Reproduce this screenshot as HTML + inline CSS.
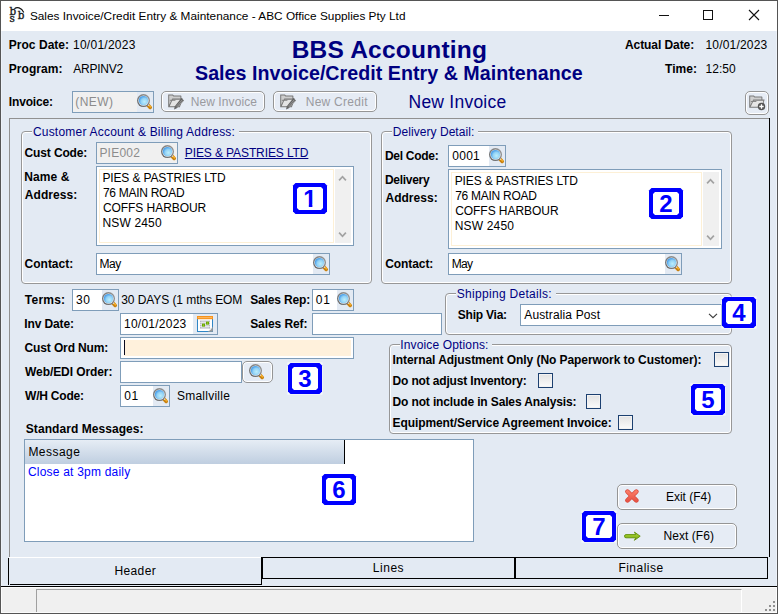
<!DOCTYPE html>
<html><head><meta charset="utf-8"><title>Sales Invoice/Credit Entry &amp; Maintenance</title>
<style>
html,body{margin:0;padding:0}
body{width:778px;height:614px;overflow:hidden;position:relative;background:#e3eaf3;font-family:"Liberation Sans",sans-serif;font-size:12px;color:#000}
#w{position:absolute;left:0;top:0;width:778px;height:614px;overflow:hidden;background:#e3eaf3}
.abs,.t,.f,.grp,.gap,.btn,.badge,.cb,.mag,.sb,.tbl,.th,.titlebar{position:absolute;box-sizing:border-box}
.t{white-space:nowrap;line-height:1}
.b{font-weight:bold}
.navy{color:#000080}
.titlebar{left:1px;top:1px;width:776px;height:30px;background:#fff}
.f{border:1px solid #7f9db9;background:#fff}
.f.dis{background:#f0f0f0}
.f.ta{box-shadow:inset 0 0 0 1px #fdf0d5}
.sb{background:#f0f0f0}
.grp{border:1px solid #979797;border-radius:4px;box-shadow:inset 0 0 0 1px #fff}
.gap{background:#e3eaf3}
.btn{border:1px solid #959595;border-radius:5px;background:#e6ecf5;box-shadow:inset 0 0 0 1px #fff}
.badge{width:34px;height:31px;border:3px solid #0000ff;border-radius:5px;background:#fff;color:#0000ff;font-weight:bold;font-size:24px;text-align:center;line-height:25px}
.badge span{display:block}
.cb{width:15px;height:15px;border:1px solid #1c4070;background:linear-gradient(#e2e2e2,#fbfbfb);box-shadow:inset 0 0 0 1px #f3f3f3}
.tbl{border:1px solid #7f9db9;background:#fff}
.th{background:linear-gradient(#e6edf5,#bfcee0)}
.frame{position:absolute;left:0;top:0;width:778px;height:614px;box-sizing:border-box;border:1px solid #555;pointer-events:none}
</style></head>
<body><div id="w">
<div class="titlebar"></div>
<svg class="abs" style="left:8px;top:6px" width="18" height="17" viewBox="0 0 18 17"><text x="1.5" y="8.9" font-family="DejaVu Serif, serif" font-weight="normal" stroke="#1a1a1a" stroke-width="0.35" font-size="10.4" fill="#1a1a1a">b</text><text x="9.7" y="12.9" font-family="DejaVu Serif, serif" font-weight="normal" stroke="#1a1a1a" stroke-width="0.35" font-size="10.4" fill="#1a1a1a">b</text><text x="1.6" y="15.9" font-family="DejaVu Serif, serif" font-weight="normal" stroke="#1a1a1a" stroke-width="0.35" font-size="10.4" fill="#1a1a1a">s</text><path d="M6.4 2.7 C8.8 0.9 13.4 1.1 15.8 6.4" fill="none" stroke="#111" stroke-width="1.1"/></svg>
<div class="t " style="left:29.90px;top:11px;font-size:11.8px;letter-spacing:0.020px;color:#000">Sales Invoice/Credit Entry &amp; Maintenance - ABC Office Supplies Pty Ltd</div>
<div class="abs" style="left:659px;top:15px;width:10px;height:1px;background:#111"></div>
<div class="abs" style="left:703px;top:10px;width:10px;height:10px;border:1px solid #111"></div>
<svg class="abs" style="left:748px;top:9px" width="12" height="12" viewBox="0 0 12 12"><path d="M1 1 L11 11 M11 1 L1 11" stroke="#111" stroke-width="1.1" fill="none"/></svg>
<div class="t b" style="left:8.75px;top:39px;font-size:12px;letter-spacing:0.033px;">Proc Date:</div>
<div class="t " style="left:73.00px;top:39px;font-size:12px;letter-spacing:0.256px;">10/01/2023</div>
<div class="t b" style="left:8.75px;top:63px;font-size:12px;letter-spacing:0.071px;">Program:</div>
<div class="t " style="left:73.30px;top:63px;font-size:12px;letter-spacing:-0.258px;">ARPINV2</div>
<div class="t b navy" style="left:291.65px;top:38px;font-size:24.5px;letter-spacing:0.231px;">BBS Accounting</div>
<div class="t b navy" style="left:195.00px;top:64px;font-size:19.65px;letter-spacing:0.032px;">Sales Invoice/Credit Entry &amp; Maintenance</div>
<div class="t b" style="left:624.95px;top:39px;font-size:12px;letter-spacing:-0.073px;">Actual Date:</div>
<div class="t " style="left:705.50px;top:39px;font-size:12px;letter-spacing:0.189px;">10/01/2023</div>
<div class="t b" style="left:665.05px;top:63px;font-size:12px;letter-spacing:0.025px;">Time:</div>
<div class="t " style="left:705.50px;top:63px;font-size:12px;letter-spacing:0.050px;">12:50</div>
<div class="t b" style="left:8.75px;top:96px;font-size:12px;letter-spacing:-0.143px;">Invoice:</div>
<div class="f dis" style="left:72px;top:91px;width:82px;height:22px;"></div>
<div class="t " style="left:75.25px;top:96px;font-size:12px;letter-spacing:0.425px;color:#8c8c8c">(NEW)</div>
<div class="abs" style="left:137px;top:92px;width:16px;height:20px;background:#e3eaf3"></div>
<svg class="mag" style="left:137px;top:94px" width="16" height="16" viewBox="0 0 16 16"><defs><radialGradient id="g1" cx="0.6" cy="0.62" r="0.65"><stop offset="0" stop-color="#bdeefb"/><stop offset="0.55" stop-color="#92d2f6"/><stop offset="1" stop-color="#3a94e6"/></radialGradient><linearGradient id="r1" x1="1" y1="0" x2="0" y2="1"><stop offset="0" stop-color="#9a9a9a"/><stop offset="1" stop-color="#626262"/></linearGradient></defs><path d="M10.9 11 L13.2 13.4" stroke="#c9820f" stroke-width="3.6" stroke-linecap="round" fill="none"/><path d="M11.5 10.8 L13.5 12.8" stroke="#f5ae2a" stroke-width="1.6" stroke-linecap="round" fill="none"/><path d="M9.6 10.6 L10.8 9.4 L12.3 10.9 L11.1 12.1Z" fill="#e9edf2"/><circle cx="6.5" cy="6.6" r="6.5" fill="url(#r1)"/><circle cx="6.5" cy="6.6" r="5.2" fill="#eceef0"/><circle cx="6.5" cy="6.6" r="4.7" fill="url(#g1)"/></svg>
<div class="btn" style="left:161px;top:91px;width:104px;height:21px;"></div>
<svg class="abs" style="left:168px;top:94px" width="17" height="16" viewBox="0 0 17 16"><path d="M0.2 0.4 H4.9 L5.9 1.6 H12.8 Q13.4 1.6 13.4 2.2 V4.6 H14.8 L11.9 13.3 H0.2 Z" fill="#777777"/><path d="M1.2 1.4 H4.4 L5.4 2.6 H12.4 V4.6 H4.3 L1.2 10.8 Z" fill="#cdcdcd"/><path d="M4.6 5.7 H13.4 L11.1 12.3 H1.7 Z" fill="#e4e4e4"/><path d="M1.9 6.3 H7.4" stroke="#7c7c7c" stroke-width="0.9"/><path d="M13.4 3.9 L16 6.5 L8.8 14.3 L6 15.6 L6.8 12.2 Z" fill="#646464"/><path d="M14.3 5.7 L8.2 12.5 M15.1 6.6 L9 13.4" stroke="#b4b4b4" stroke-width="0.6"/></svg>
<div class="t " style="left:190.70px;top:96px;font-size:12px;letter-spacing:0.085px;color:#9a9a9f">New Invoice</div>
<div class="btn" style="left:273px;top:91px;width:104px;height:21px;"></div>
<svg class="abs" style="left:280px;top:94px" width="17" height="16" viewBox="0 0 17 16"><path d="M0.2 0.4 H4.9 L5.9 1.6 H12.8 Q13.4 1.6 13.4 2.2 V4.6 H14.8 L11.9 13.3 H0.2 Z" fill="#777777"/><path d="M1.2 1.4 H4.4 L5.4 2.6 H12.4 V4.6 H4.3 L1.2 10.8 Z" fill="#cdcdcd"/><path d="M4.6 5.7 H13.4 L11.1 12.3 H1.7 Z" fill="#e4e4e4"/><path d="M1.9 6.3 H7.4" stroke="#7c7c7c" stroke-width="0.9"/><path d="M13.4 3.9 L16 6.5 L8.8 14.3 L6 15.6 L6.8 12.2 Z" fill="#646464"/><path d="M14.3 5.7 L8.2 12.5 M15.1 6.6 L9 13.4" stroke="#b4b4b4" stroke-width="0.6"/></svg>
<div class="t " style="left:305.70px;top:96px;font-size:12px;letter-spacing:0.272px;color:#9a9a9f">New Credit</div>
<div class="t navy" style="left:408.50px;top:94px;font-size:17.5px;letter-spacing:0.240px;">New Invoice</div>
<div class="btn" style="left:745px;top:91px;width:24px;height:24px;"></div>
<svg class="abs" style="left:749px;top:95px" width="17" height="16" viewBox="0 0 17 16"><path d="M0.2 0.4 H4.9 L5.9 1.6 H12.8 Q13.4 1.6 13.4 2.2 V4.6 H15.6 L13.4 12.8 H0.2 Z" fill="#7a7a7a"/><path d="M1.2 1.4 H4.4 L5.4 2.6 H12.4 V4.6 H4.3 L1.2 10.6 Z" fill="#cfcfcf"/><path d="M4.6 5.7 H14.3 L12.6 11.8 H1.7 Z" fill="#e6e6e6"/><path d="M1.9 6.5 H7.4" stroke="#808080" stroke-width="0.9"/><circle cx="12.5" cy="11.5" r="3.7" fill="#555555"/><path d="M12.5 9.3 V13.7 M10.3 11.5 H14.7" stroke="#ffffff" stroke-width="1.3"/></svg>
<div class="abs" style="left:9px;top:118px;width:761px;height:1px;background:#919191"></div>
<div class="abs" style="left:9px;top:118px;width:1px;height:440px;background:#919191"></div>
<div class="abs" style="left:769px;top:118px;width:1px;height:439px;background:#000"></div>
<div class="grp" style="left:21px;top:131px;width:351px;height:153px;"></div>
<div class="gap" style="left:31.9px;top:129px;width:207.0px;height:6px"></div>
<div class="t navy" style="left:32.90px;top:126px;font-size:12px;letter-spacing:0.213px;">Customer Account &amp; Billing Address:</div>
<div class="t b" style="left:24.60px;top:147px;font-size:12px;letter-spacing:-0.139px;">Cust Code:</div>
<div class="f dis" style="left:96px;top:142px;width:82px;height:22px;"></div>
<div class="t " style="left:99.40px;top:147px;font-size:12px;letter-spacing:0.230px;color:#8c8c8c">PIE002</div>
<svg class="mag" style="left:161px;top:145px" width="16" height="16" viewBox="0 0 16 16"><defs><radialGradient id="g2" cx="0.6" cy="0.62" r="0.65"><stop offset="0" stop-color="#bdeefb"/><stop offset="0.55" stop-color="#92d2f6"/><stop offset="1" stop-color="#3a94e6"/></radialGradient><linearGradient id="r2" x1="1" y1="0" x2="0" y2="1"><stop offset="0" stop-color="#9a9a9a"/><stop offset="1" stop-color="#626262"/></linearGradient></defs><path d="M10.9 11 L13.2 13.4" stroke="#c9820f" stroke-width="3.6" stroke-linecap="round" fill="none"/><path d="M11.5 10.8 L13.5 12.8" stroke="#f5ae2a" stroke-width="1.6" stroke-linecap="round" fill="none"/><path d="M9.6 10.6 L10.8 9.4 L12.3 10.9 L11.1 12.1Z" fill="#e9edf2"/><circle cx="6.5" cy="6.6" r="6.5" fill="url(#r2)"/><circle cx="6.5" cy="6.6" r="5.2" fill="#eceef0"/><circle cx="6.5" cy="6.6" r="4.7" fill="url(#g2)"/></svg>
<div class="t navy" style="left:184.80px;top:147px;font-size:12px;letter-spacing:-0.106px;text-decoration:underline;text-underline-offset:1px">PIES &amp; PASTRIES LTD</div>
<div class="t b" style="left:24.35px;top:171px;font-size:12px;letter-spacing:0.080px;">Name &amp;</div>
<div class="t b" style="left:24.85px;top:189px;font-size:12px;letter-spacing:0.057px;">Address:</div>
<div class="f " style="left:96px;top:166px;width:258px;height:80px;"></div>
<div class="abs" style="left:99px;top:169px;width:235px;height:74px;border:1px solid #fdf0d6"></div>
<div class="abs" style="left:335px;top:169px;width:16px;height:74px;background:#f0f0f0"></div>
<svg class="abs" style="left:339px;top:175px;overflow:visible" width="7" height="6" viewBox="0 0 7 6"><path d="M0.1 5.3 L3.5 1.7 L6.9 5.3" fill="none" stroke="#a2a2a2" stroke-width="1.7"/></svg>
<svg class="abs" style="left:339px;top:232px;overflow:visible" width="7" height="6" viewBox="0 0 7 6"><path d="M0.1 0.7 L3.5 4.3 L6.9 0.7" fill="none" stroke="#a2a2a2" stroke-width="1.7"/></svg>
<div class="t " style="left:102.40px;top:172px;font-size:12px;letter-spacing:-0.128px;">PIES &amp; PASTRIES LTD</div>
<div class="t " style="left:102.90px;top:187px;font-size:12px;letter-spacing:-0.273px;">76 MAIN ROAD</div>
<div class="t " style="left:102.90px;top:202px;font-size:12px;letter-spacing:-0.054px;">COFFS HARBOUR</div>
<div class="t " style="left:102.40px;top:217px;font-size:12px;letter-spacing:0.171px;">NSW 2450</div>
<div class="t b" style="left:24.60px;top:258px;font-size:12px;letter-spacing:-0.014px;">Contact:</div>
<div class="f " style="left:96px;top:253px;width:234px;height:22px;"></div>
<div class="t " style="left:99.40px;top:258px;font-size:12px;letter-spacing:-0.450px;">May</div>
<div class="abs" style="left:313px;top:254px;width:16px;height:20px;background:#e3eaf3"></div>
<svg class="mag" style="left:313px;top:256px" width="16" height="16" viewBox="0 0 16 16"><defs><radialGradient id="g3" cx="0.6" cy="0.62" r="0.65"><stop offset="0" stop-color="#bdeefb"/><stop offset="0.55" stop-color="#92d2f6"/><stop offset="1" stop-color="#3a94e6"/></radialGradient><linearGradient id="r3" x1="1" y1="0" x2="0" y2="1"><stop offset="0" stop-color="#9a9a9a"/><stop offset="1" stop-color="#626262"/></linearGradient></defs><path d="M10.9 11 L13.2 13.4" stroke="#c9820f" stroke-width="3.6" stroke-linecap="round" fill="none"/><path d="M11.5 10.8 L13.5 12.8" stroke="#f5ae2a" stroke-width="1.6" stroke-linecap="round" fill="none"/><path d="M9.6 10.6 L10.8 9.4 L12.3 10.9 L11.1 12.1Z" fill="#e9edf2"/><circle cx="6.5" cy="6.6" r="6.5" fill="url(#r3)"/><circle cx="6.5" cy="6.6" r="5.2" fill="#eceef0"/><circle cx="6.5" cy="6.6" r="4.7" fill="url(#g3)"/></svg>
<svg class="abs" style="left:292px;top:182px" width="36" height="33" viewBox="-1 -1 36 33"><rect x="-0.6" y="-0.6" width="35.2" height="32.2" fill="#ffffff" fill-opacity="0.75"/><path d="M2.5 0 H31.5 L34 2.5 V28.5 L31.5 31 H2.5 L0 28.5 V2.5 Z" fill="#0000ff"/><path d="M6 4 H28 L30 6 V25 L28 27 H6 L4 25 V6 Z" fill="#ffffff"/><clipPath id="c1"><path d="M0 0 H34 V21 H19.4 V25 H15.8 V21 H0 Z"/></clipPath><text x="17" y="24" text-anchor="middle" font-family="Liberation Sans, sans-serif" font-weight="bold" font-size="24" fill="#0000ff" clip-path="url(#c1)">1</text></svg>
<div class="grp" style="left:381px;top:131px;width:351px;height:153px;"></div>
<div class="gap" style="left:392.3px;top:129px;width:86.0px;height:6px"></div>
<div class="t navy" style="left:392.80px;top:126px;font-size:12px;letter-spacing:0.050px;">Delivery Detail:</div>
<div class="t b" style="left:384.95px;top:150px;font-size:12px;letter-spacing:-0.275px;">Del Code:</div>
<div class="f " style="left:448px;top:145px;width:58px;height:22px;"></div>
<div class="t " style="left:452.20px;top:150px;font-size:12px;letter-spacing:0.300px;">0001</div>
<div class="abs" style="left:489px;top:146px;width:16px;height:20px;background:#e3eaf3"></div>
<svg class="mag" style="left:489px;top:148px" width="16" height="16" viewBox="0 0 16 16"><defs><radialGradient id="g4" cx="0.6" cy="0.62" r="0.65"><stop offset="0" stop-color="#bdeefb"/><stop offset="0.55" stop-color="#92d2f6"/><stop offset="1" stop-color="#3a94e6"/></radialGradient><linearGradient id="r4" x1="1" y1="0" x2="0" y2="1"><stop offset="0" stop-color="#9a9a9a"/><stop offset="1" stop-color="#626262"/></linearGradient></defs><path d="M10.9 11 L13.2 13.4" stroke="#c9820f" stroke-width="3.6" stroke-linecap="round" fill="none"/><path d="M11.5 10.8 L13.5 12.8" stroke="#f5ae2a" stroke-width="1.6" stroke-linecap="round" fill="none"/><path d="M9.6 10.6 L10.8 9.4 L12.3 10.9 L11.1 12.1Z" fill="#e9edf2"/><circle cx="6.5" cy="6.6" r="6.5" fill="url(#r4)"/><circle cx="6.5" cy="6.6" r="5.2" fill="#eceef0"/><circle cx="6.5" cy="6.6" r="4.7" fill="url(#g4)"/></svg>
<div class="t b" style="left:384.95px;top:174px;font-size:12px;letter-spacing:-0.293px;">Delivery</div>
<div class="t b" style="left:385.45px;top:192px;font-size:12px;letter-spacing:0.029px;">Address:</div>
<div class="f " style="left:448px;top:169px;width:274px;height:80px;"></div>
<div class="abs" style="left:451px;top:172px;width:251px;height:74px;border:1px solid #fdf0d6"></div>
<div class="abs" style="left:703px;top:172px;width:16px;height:74px;background:#f0f0f0"></div>
<svg class="abs" style="left:707px;top:178px;overflow:visible" width="7" height="6" viewBox="0 0 7 6"><path d="M0.1 5.3 L3.5 1.7 L6.9 5.3" fill="none" stroke="#a2a2a2" stroke-width="1.7"/></svg>
<svg class="abs" style="left:707px;top:235px;overflow:visible" width="7" height="6" viewBox="0 0 7 6"><path d="M0.1 0.7 L3.5 4.3 L6.9 0.7" fill="none" stroke="#a2a2a2" stroke-width="1.7"/></svg>
<div class="t " style="left:454.70px;top:175px;font-size:12px;letter-spacing:-0.128px;">PIES &amp; PASTRIES LTD</div>
<div class="t " style="left:455.20px;top:190px;font-size:12px;letter-spacing:-0.273px;">76 MAIN ROAD</div>
<div class="t " style="left:455.20px;top:205px;font-size:12px;letter-spacing:-0.054px;">COFFS HARBOUR</div>
<div class="t " style="left:454.70px;top:220px;font-size:12px;letter-spacing:0.171px;">NSW 2450</div>
<div class="t b" style="left:385.20px;top:258px;font-size:12px;letter-spacing:-0.071px;">Contact:</div>
<div class="f " style="left:448px;top:253px;width:234px;height:22px;"></div>
<div class="t " style="left:451.70px;top:258px;font-size:12px;letter-spacing:-0.700px;">May</div>
<div class="abs" style="left:665px;top:254px;width:16px;height:20px;background:#e3eaf3"></div>
<svg class="mag" style="left:665px;top:256px" width="16" height="16" viewBox="0 0 16 16"><defs><radialGradient id="g5" cx="0.6" cy="0.62" r="0.65"><stop offset="0" stop-color="#bdeefb"/><stop offset="0.55" stop-color="#92d2f6"/><stop offset="1" stop-color="#3a94e6"/></radialGradient><linearGradient id="r5" x1="1" y1="0" x2="0" y2="1"><stop offset="0" stop-color="#9a9a9a"/><stop offset="1" stop-color="#626262"/></linearGradient></defs><path d="M10.9 11 L13.2 13.4" stroke="#c9820f" stroke-width="3.6" stroke-linecap="round" fill="none"/><path d="M11.5 10.8 L13.5 12.8" stroke="#f5ae2a" stroke-width="1.6" stroke-linecap="round" fill="none"/><path d="M9.6 10.6 L10.8 9.4 L12.3 10.9 L11.1 12.1Z" fill="#e9edf2"/><circle cx="6.5" cy="6.6" r="6.5" fill="url(#r5)"/><circle cx="6.5" cy="6.6" r="5.2" fill="#eceef0"/><circle cx="6.5" cy="6.6" r="4.7" fill="url(#g5)"/></svg>
<svg class="abs" style="left:648px;top:187px" width="36" height="33" viewBox="-1 -1 36 33"><rect x="-0.6" y="-0.6" width="35.2" height="32.2" fill="#ffffff" fill-opacity="0.75"/><path d="M2.5 0 H31.5 L34 2.5 V28.5 L31.5 31 H2.5 L0 28.5 V2.5 Z" fill="#0000ff"/><path d="M6 4 H28 L30 6 V25 L28 27 H6 L4 25 V6 Z" fill="#ffffff"/><text x="17" y="24" text-anchor="middle" font-family="Liberation Sans, sans-serif" font-weight="bold" font-size="24" fill="#0000ff">2</text></svg>
<div class="t b" style="left:24.85px;top:294px;font-size:12px;letter-spacing:0.230px;">Terms:</div>
<div class="f " style="left:72px;top:289px;width:47px;height:22px;"></div>
<div class="t " style="left:76.00px;top:294px;font-size:12px;letter-spacing:0.600px;">30</div>
<div class="abs" style="left:102px;top:290px;width:16px;height:20px;background:#e3eaf3"></div>
<svg class="mag" style="left:102px;top:292px" width="16" height="16" viewBox="0 0 16 16"><defs><radialGradient id="g6" cx="0.6" cy="0.62" r="0.65"><stop offset="0" stop-color="#bdeefb"/><stop offset="0.55" stop-color="#92d2f6"/><stop offset="1" stop-color="#3a94e6"/></radialGradient><linearGradient id="r6" x1="1" y1="0" x2="0" y2="1"><stop offset="0" stop-color="#9a9a9a"/><stop offset="1" stop-color="#626262"/></linearGradient></defs><path d="M10.9 11 L13.2 13.4" stroke="#c9820f" stroke-width="3.6" stroke-linecap="round" fill="none"/><path d="M11.5 10.8 L13.5 12.8" stroke="#f5ae2a" stroke-width="1.6" stroke-linecap="round" fill="none"/><path d="M9.6 10.6 L10.8 9.4 L12.3 10.9 L11.1 12.1Z" fill="#e9edf2"/><circle cx="6.5" cy="6.6" r="6.5" fill="url(#r6)"/><circle cx="6.5" cy="6.6" r="5.2" fill="#eceef0"/><circle cx="6.5" cy="6.6" r="4.7" fill="url(#g6)"/></svg>
<div class="t " style="left:121.20px;top:294px;font-size:12px;letter-spacing:-0.072px;">30 DAYS (1 mths EOM</div>
<div class="t b" style="left:250.20px;top:294px;font-size:12px;letter-spacing:-0.139px;">Sales Rep:</div>
<div class="f " style="left:312px;top:289px;width:42px;height:22px;"></div>
<div class="t " style="left:315.70px;top:294px;font-size:12px;letter-spacing:0.850px;">01</div>
<div class="abs" style="left:337px;top:290px;width:16px;height:20px;background:#e3eaf3"></div>
<svg class="mag" style="left:337px;top:292px" width="16" height="16" viewBox="0 0 16 16"><defs><radialGradient id="g7" cx="0.6" cy="0.62" r="0.65"><stop offset="0" stop-color="#bdeefb"/><stop offset="0.55" stop-color="#92d2f6"/><stop offset="1" stop-color="#3a94e6"/></radialGradient><linearGradient id="r7" x1="1" y1="0" x2="0" y2="1"><stop offset="0" stop-color="#9a9a9a"/><stop offset="1" stop-color="#626262"/></linearGradient></defs><path d="M10.9 11 L13.2 13.4" stroke="#c9820f" stroke-width="3.6" stroke-linecap="round" fill="none"/><path d="M11.5 10.8 L13.5 12.8" stroke="#f5ae2a" stroke-width="1.6" stroke-linecap="round" fill="none"/><path d="M9.6 10.6 L10.8 9.4 L12.3 10.9 L11.1 12.1Z" fill="#e9edf2"/><circle cx="6.5" cy="6.6" r="6.5" fill="url(#r7)"/><circle cx="6.5" cy="6.6" r="5.2" fill="#eceef0"/><circle cx="6.5" cy="6.6" r="4.7" fill="url(#g7)"/></svg>
<div class="t b" style="left:24.35px;top:318px;font-size:12px;letter-spacing:-0.131px;">Inv Date:</div>
<div class="f " style="left:120px;top:313px;width:98px;height:22px;"></div>
<div class="t " style="left:124.00px;top:318px;font-size:12px;letter-spacing:0.244px;">10/01/2023</div>
<div class="abs" style="left:193px;top:314px;width:24px;height:20px;background:#e3eaf3"></div>
<svg class="abs" style="left:197px;top:316px" width="16" height="16" viewBox="0 0 16 16"><rect x="0.5" y="1.5" width="15" height="14" fill="#ffffff" stroke="#2f86c6"/><rect x="0" y="0" width="16" height="3.2" fill="#f7931c"/><rect x="1" y="1.3" width="14" height="0.8" fill="#fcc47a"/><rect x="3" y="4.6" width="10" height="8" fill="#b4b7bf"/><path d="M5 4.6 V12.6 M7 4.6 V12.6 M9 4.6 V12.6 M11 4.6 V12.6 M3 6.6 H13 M3 8.6 H13 M3 10.6 H13" stroke="#f4f5f8" stroke-width="0.7"/><rect x="5" y="7.6" width="3" height="3" fill="#6aa700"/><rect x="9" y="5.6" width="3" height="3" fill="#6aa700"/><rect x="6" y="8.6" width="1" height="1" fill="#a6d843"/><rect x="10" y="6.6" width="1" height="1" fill="#a6d843"/><path d="M10.5 15.8 Q13.5 14.5 15.8 10.5 V15.8 Z" fill="#9b9b9b"/><path d="M10.8 15 Q13 14.2 13.6 12 Q14.6 12.6 15.4 11.4 Q13.8 14.6 10.8 15Z" fill="#e6e9ee"/></svg>
<div class="t b" style="left:250.20px;top:318px;font-size:12px;letter-spacing:-0.083px;">Sales Ref:</div>
<div class="f " style="left:312px;top:313px;width:130px;height:22px;"></div>
<div class="t b" style="left:24.60px;top:342px;font-size:12px;letter-spacing:-0.138px;">Cust Ord Num:</div>
<div class="f " style="left:120px;top:337px;width:234px;height:22px;"></div>
<div class="abs" style="left:124px;top:340px;width:227px;height:16px;background:#fff1dc"></div>
<div class="abs" style="left:124px;top:340px;width:1px;height:15px;background:#0a0a1e"></div>
<div class="t b" style="left:25.10px;top:366px;font-size:12px;letter-spacing:-0.088px;">Web/EDI Order:</div>
<div class="f " style="left:120px;top:361px;width:122px;height:22px;"></div>
<div class="btn" style="left:242px;top:361px;width:31px;height:22px;"></div>
<svg class="mag" style="left:249px;top:364px" width="16" height="16" viewBox="0 0 16 16"><defs><radialGradient id="g8" cx="0.6" cy="0.62" r="0.65"><stop offset="0" stop-color="#bdeefb"/><stop offset="0.55" stop-color="#92d2f6"/><stop offset="1" stop-color="#3a94e6"/></radialGradient><linearGradient id="r8" x1="1" y1="0" x2="0" y2="1"><stop offset="0" stop-color="#9a9a9a"/><stop offset="1" stop-color="#626262"/></linearGradient></defs><path d="M10.9 11 L13.2 13.4" stroke="#c9820f" stroke-width="3.6" stroke-linecap="round" fill="none"/><path d="M11.5 10.8 L13.5 12.8" stroke="#f5ae2a" stroke-width="1.6" stroke-linecap="round" fill="none"/><path d="M9.6 10.6 L10.8 9.4 L12.3 10.9 L11.1 12.1Z" fill="#e9edf2"/><circle cx="6.5" cy="6.6" r="6.5" fill="url(#r8)"/><circle cx="6.5" cy="6.6" r="5.2" fill="#eceef0"/><circle cx="6.5" cy="6.6" r="4.7" fill="url(#g8)"/></svg>
<svg class="abs" style="left:287px;top:362px" width="36" height="33" viewBox="-1 -1 36 33"><rect x="-0.6" y="-0.6" width="35.2" height="32.2" fill="#ffffff" fill-opacity="0.75"/><path d="M2.5 0 H31.5 L34 2.5 V28.5 L31.5 31 H2.5 L0 28.5 V2.5 Z" fill="#0000ff"/><path d="M6 4 H28 L30 6 V25 L28 27 H6 L4 25 V6 Z" fill="#ffffff"/><text x="17" y="24" text-anchor="middle" font-family="Liberation Sans, sans-serif" font-weight="bold" font-size="24" fill="#0000ff">3</text></svg>
<div class="t b" style="left:25.10px;top:390px;font-size:12px;letter-spacing:-0.225px;">W/H Code:</div>
<div class="f " style="left:120px;top:385px;width:50px;height:22px;"></div>
<div class="t " style="left:124.20px;top:390px;font-size:12px;letter-spacing:0.550px;">01</div>
<div class="abs" style="left:153px;top:386px;width:16px;height:20px;background:#e3eaf3"></div>
<svg class="mag" style="left:153px;top:388px" width="16" height="16" viewBox="0 0 16 16"><defs><radialGradient id="g9" cx="0.6" cy="0.62" r="0.65"><stop offset="0" stop-color="#bdeefb"/><stop offset="0.55" stop-color="#92d2f6"/><stop offset="1" stop-color="#3a94e6"/></radialGradient><linearGradient id="r9" x1="1" y1="0" x2="0" y2="1"><stop offset="0" stop-color="#9a9a9a"/><stop offset="1" stop-color="#626262"/></linearGradient></defs><path d="M10.9 11 L13.2 13.4" stroke="#c9820f" stroke-width="3.6" stroke-linecap="round" fill="none"/><path d="M11.5 10.8 L13.5 12.8" stroke="#f5ae2a" stroke-width="1.6" stroke-linecap="round" fill="none"/><path d="M9.6 10.6 L10.8 9.4 L12.3 10.9 L11.1 12.1Z" fill="#e9edf2"/><circle cx="6.5" cy="6.6" r="6.5" fill="url(#r9)"/><circle cx="6.5" cy="6.6" r="5.2" fill="#eceef0"/><circle cx="6.5" cy="6.6" r="4.7" fill="url(#g9)"/></svg>
<div class="t " style="left:176.90px;top:390px;font-size:12px;letter-spacing:0.250px;">Smallville</div>
<div class="grp" style="left:445px;top:293px;width:287px;height:42px;"></div>
<div class="gap" style="left:455.8px;top:291px;width:99.8px;height:6px"></div>
<div class="t navy" style="left:456.80px;top:288px;font-size:12px;letter-spacing:0.300px;">Shipping Details:</div>
<div class="t b" style="left:457.80px;top:309px;font-size:12px;letter-spacing:-0.225px;">Ship Via:</div>
<div class="f " style="left:520px;top:304px;width:202px;height:22px;"></div>
<div class="t " style="left:524.30px;top:309px;font-size:12px;letter-spacing:0.131px;">Australia Post</div>
<svg class="abs" style="left:708px;top:313px" width="10" height="6" viewBox="0 0 10 6"><path d="M1 0.9 L5 4.7 L9 0.9" fill="none" stroke="#3c3c3c" stroke-width="1.15"/></svg>
<svg class="abs" style="left:721px;top:296px" width="36" height="33" viewBox="-1 -1 36 33"><rect x="-0.6" y="-0.6" width="35.2" height="32.2" fill="#ffffff" fill-opacity="0.75"/><path d="M2.5 0 H31.5 L34 2.5 V28.5 L31.5 31 H2.5 L0 28.5 V2.5 Z" fill="#0000ff"/><path d="M6 4 H28 L30 6 V25 L28 27 H6 L4 25 V6 Z" fill="#ffffff"/><text x="17" y="24" text-anchor="middle" font-family="Liberation Sans, sans-serif" font-weight="bold" font-size="24" fill="#0000ff">4</text></svg>
<div class="grp" style="left:389px;top:344px;width:343px;height:90px;"></div>
<div class="gap" style="left:399.8px;top:342px;width:92.6px;height:6px"></div>
<div class="t navy" style="left:400.30px;top:339px;font-size:12px;letter-spacing:0.140px;">Invoice Options:</div>
<div class="t b" style="left:392.55px;top:354px;font-size:12px;letter-spacing:-0.066px;">Internal Adjustment Only (No Paperwork to Customer):</div>
<div class="cb" style="left:714px;top:352px"></div>
<div class="t b" style="left:392.55px;top:375px;font-size:12px;letter-spacing:-0.165px;">Do not adjust Inventory:</div>
<div class="cb" style="left:538px;top:373px"></div>
<div class="t b" style="left:392.55px;top:396px;font-size:12px;letter-spacing:-0.136px;">Do not include in Sales Analysis:</div>
<div class="cb" style="left:586px;top:394px"></div>
<div class="t b" style="left:392.55px;top:417px;font-size:12px;letter-spacing:-0.091px;">Equipment/Service Agreement Invoice:</div>
<div class="cb" style="left:618px;top:415px"></div>
<svg class="abs" style="left:690px;top:383px" width="36" height="33" viewBox="-1 -1 36 33"><rect x="-0.6" y="-0.6" width="35.2" height="32.2" fill="#ffffff" fill-opacity="0.75"/><path d="M2.5 0 H31.5 L34 2.5 V28.5 L31.5 31 H2.5 L0 28.5 V2.5 Z" fill="#0000ff"/><path d="M6 4 H28 L30 6 V25 L28 27 H6 L4 25 V6 Z" fill="#ffffff"/><text x="17" y="24" text-anchor="middle" font-family="Liberation Sans, sans-serif" font-weight="bold" font-size="24" fill="#0000ff">5</text></svg>
<div class="t b" style="left:25.80px;top:423px;font-size:12px;letter-spacing:0.059px;">Standard Messages:</div>
<div class="tbl" style="left:24px;top:439px;width:450px;height:103px;"></div>
<div class="th" style="left:25px;top:440px;width:320px;height:24px;"></div>
<div class="abs" style="left:344px;top:440px;width:1px;height:24px;background:#000"></div>
<div class="t " style="left:28.40px;top:446px;font-size:12px;letter-spacing:0.475px;">Message</div>
<div class="t " style="left:27.90px;top:466px;font-size:12px;letter-spacing:0.212px;color:#0000ff">Close at 3pm daily</div>
<svg class="abs" style="left:321px;top:473px" width="36" height="33" viewBox="-1 -1 36 33"><rect x="-0.6" y="-0.6" width="35.2" height="32.2" fill="#ffffff" fill-opacity="0.75"/><path d="M2.5 0 H31.5 L34 2.5 V28.5 L31.5 31 H2.5 L0 28.5 V2.5 Z" fill="#0000ff"/><path d="M6 4 H28 L30 6 V25 L28 27 H6 L4 25 V6 Z" fill="#ffffff"/><text x="17" y="24" text-anchor="middle" font-family="Liberation Sans, sans-serif" font-weight="bold" font-size="24" fill="#0000ff">6</text></svg>
<div class="btn" style="left:617px;top:484px;width:120px;height:26px;"></div>
<svg class="abs" style="left:624px;top:489px" width="16" height="14" viewBox="0 0 16 14"><defs><linearGradient id="xg" x1="0" y1="0" x2="0" y2="1"><stop offset="0" stop-color="#fa7a66"/><stop offset="1" stop-color="#e85547"/></linearGradient></defs><path d="M3.5 2.6 L12.3 11.4 M12.3 2.6 L3.5 11.4" stroke="#d9493c" stroke-width="4.6" stroke-linecap="round" fill="none"/><path d="M3.5 2.6 L12.3 11.4 M12.3 2.6 L3.5 11.4" stroke="url(#xg)" stroke-width="3.2" stroke-linecap="round" fill="none"/></svg>
<div class="t " style="left:665.90px;top:491px;font-size:12px;">Exit (F4)</div>
<div class="btn" style="left:617px;top:523px;width:120px;height:26px;"></div>
<svg class="abs" style="left:624px;top:531px" width="17" height="10" viewBox="0 0 17 10"><defs><linearGradient id="ag" x1="0" y1="0" x2="0" y2="1"><stop offset="0" stop-color="#b4de3c"/><stop offset="1" stop-color="#77a80c"/></linearGradient></defs><path d="M10.4 1.1 L16.2 5.2 L10.4 9.3 L11.8 6.8 H2 Q0.5 6.8 0.5 5.2 Q0.5 3.6 2 3.6 H11.8 Z" fill="url(#ag)" stroke="#5f8d08" stroke-width="0.9" stroke-linejoin="round"/></svg>
<div class="t " style="left:663.50px;top:530px;font-size:12px;letter-spacing:0.056px;">Next (F6)</div>
<svg class="abs" style="left:581px;top:510px" width="36" height="33" viewBox="-1 -1 36 33"><rect x="-0.6" y="-0.6" width="35.2" height="32.2" fill="#ffffff" fill-opacity="0.75"/><path d="M2.5 0 H31.5 L34 2.5 V28.5 L31.5 31 H2.5 L0 28.5 V2.5 Z" fill="#0000ff"/><path d="M6 4 H28 L30 6 V25 L28 27 H6 L4 25 V6 Z" fill="#ffffff"/><text x="17" y="24" text-anchor="middle" font-family="Liberation Sans, sans-serif" font-weight="bold" font-size="24" fill="#0000ff">7</text></svg>
<div class="abs" style="left:9px;top:557px;width:252px;height:1px;background:#fff"></div>
<div class="abs" style="left:8px;top:558px;width:1px;height:27px;background:#000"></div>
<div class="abs" style="left:10px;top:584px;width:252px;height:1px;background:#000"></div>
<div class="abs" style="left:262px;top:557px;width:1px;height:22px;background:#000"></div>
<div class="abs" style="left:261px;top:558px;width:1px;height:27px;background:#000"></div>
<div class="t " style="left:114.40px;top:565px;font-size:12px;letter-spacing:0.390px;">Header</div>
<div class="abs" style="left:261px;top:557px;width:507px;height:1px;background:#000"></div>
<div class="abs" style="left:262px;top:578px;width:506px;height:1px;background:#000"></div>
<div class="abs" style="left:514px;top:557px;width:1px;height:22px;background:#000"></div>
<div class="abs" style="left:515px;top:557px;width:1px;height:22px;background:#000"></div>
<div class="abs" style="left:767px;top:557px;width:1px;height:22px;background:#000"></div>
<div class="t " style="left:372.70px;top:562px;font-size:12px;letter-spacing:0.562px;">Lines</div>
<div class="t " style="left:618.40px;top:562px;font-size:12px;letter-spacing:0.479px;">Finalise</div>
<div class="abs" style="left:1px;top:586px;width:776px;height:1px;background:#000"></div>
<div class="abs" style="left:1px;top:587px;width:776px;height:26px;background:#f0f0f0"></div>
<div class="abs" style="left:1px;top:587px;width:776px;height:1px;background:#fcfcfc"></div>
<div class="abs" style="left:776px;top:587px;width:1px;height:26px;background:#fcfcfc"></div>
<div class="abs" style="left:1px;top:587px;width:1px;height:26px;background:#fcfcfc"></div>
<div class="abs" style="left:36px;top:589px;width:706px;height:23px;border-left:1px solid #a0a0a0;border-top:1px solid #a0a0a0;border-right:1px solid #fff;box-sizing:border-box"></div>
<div class="abs" style="left:773px;top:601px;width:2px;height:2px;background:#909090"></div>
<div class="abs" style="left:769px;top:605px;width:2px;height:2px;background:#909090"></div>
<div class="abs" style="left:773px;top:605px;width:2px;height:2px;background:#909090"></div>
<div class="abs" style="left:765px;top:609px;width:2px;height:2px;background:#909090"></div>
<div class="abs" style="left:769px;top:609px;width:2px;height:2px;background:#909090"></div>
<div class="abs" style="left:773px;top:609px;width:2px;height:2px;background:#909090"></div>
<div class="abs" style="left:1px;top:31px;width:1px;height:555px;background:#edf2f9"></div><div class="abs" style="left:776px;top:31px;width:1px;height:555px;background:#edf2f9"></div><div class="abs" style="left:1px;top:612px;width:776px;height:1px;background:#fbfbfb"></div><div class="frame"></div>
</div></body></html>
